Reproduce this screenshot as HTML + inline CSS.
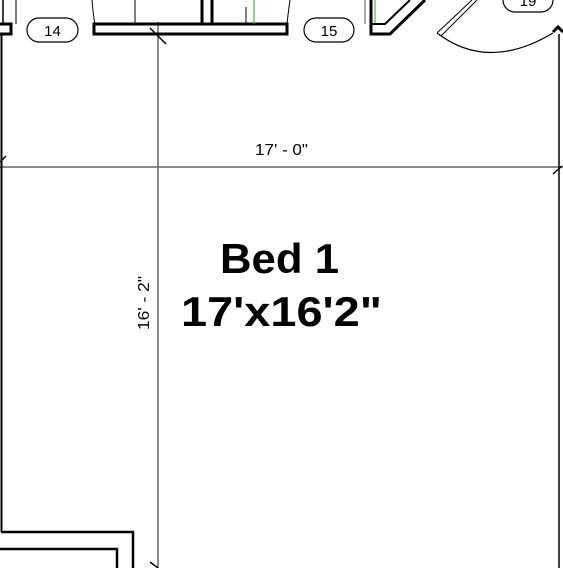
<!DOCTYPE html>
<html><head><style>html,body{margin:0;padding:0;background:#fff;overflow:hidden}svg{display:block}</style></head>
<body>
<svg width="563" height="568" viewBox="0 0 563 568" xmlns="http://www.w3.org/2000/svg" font-family="Liberation Sans, Arial, sans-serif">
<line x1="0" y1="167" x2="563" y2="167" stroke="#666" stroke-width="1.5"/>
<line x1="158" y1="22" x2="158" y2="568" stroke="#666" stroke-width="1.5"/>
<line x1="150" y1="28" x2="166" y2="44" stroke="#000" stroke-width="1.5"/>
<line x1="0" y1="162" x2="6" y2="156" stroke="#000" stroke-width="1.5"/>
<line x1="553" y1="174" x2="562" y2="166" stroke="#000" stroke-width="1.5"/>
<line x1="150" y1="562" x2="158" y2="568" stroke="#000" stroke-width="1.5"/>
<line x1="3" y1="0" x2="3" y2="24" stroke="#000" stroke-width="1.5"/>
<line x1="16" y1="0" x2="16" y2="24" stroke="#000" stroke-width="1"/>
<polyline points="0,24 11,24 11,34 0,34" fill="none" stroke="#000" stroke-width="3"/>
<line x1="1.5" y1="34" x2="1.5" y2="532" stroke="#000" stroke-width="2"/>
<polyline points="1,532 133,532 133,568" fill="none" stroke="#000" stroke-width="2.5"/>
<polyline points="0,549 117,549 117,568" fill="none" stroke="#000" stroke-width="2.5"/>
<rect x="94" y="24" width="193" height="10" fill="none" stroke="#000" stroke-width="3"/>
<line x1="202" y1="0" x2="202" y2="24" stroke="#000" stroke-width="3"/>
<line x1="212" y1="0" x2="212" y2="24" stroke="#000" stroke-width="3"/>
<line x1="135" y1="0" x2="135" y2="24" stroke="#000" stroke-width="1"/>
<line x1="246" y1="7" x2="246" y2="24" stroke="#000" stroke-width="1"/>
<line x1="254" y1="0" x2="254" y2="24" stroke="#2a2" stroke-width="1"/>
<path d="M92,0 Q93,14 95,24" fill="none" stroke="#000" stroke-width="1"/>
<path d="M290,0 Q288,14 287,24" fill="none" stroke="#000" stroke-width="1"/>
<rect x="27" y="18" width="51" height="24" rx="12" fill="#fff" stroke="#000" stroke-width="1.2"/>
<text x="52.5" y="36" font-size="15" text-anchor="middle">14</text>
<rect x="304" y="18" width="50" height="24" rx="12" fill="#fff" stroke="#000" stroke-width="1.2"/>
<text x="329" y="36" font-size="15" text-anchor="middle">15</text>
<rect x="503" y="-12" width="50" height="24" rx="12" fill="#fff" stroke="#000" stroke-width="1.2"/>
<text x="528" y="6" font-size="15" text-anchor="middle">19</text>
<line x1="365" y1="0" x2="365" y2="24" stroke="#555" stroke-width="1"/>
<line x1="375" y1="0" x2="375" y2="24" stroke="#2a2" stroke-width="1"/>
<polyline points="371,0 371,34 390,34 425,0" fill="none" stroke="#000" stroke-width="3"/>
<polyline points="371,24 385,24 410,0" fill="none" stroke="#000" stroke-width="2"/>
<line x1="437" y1="33" x2="472" y2="0" stroke="#000" stroke-width="1"/>
<line x1="441" y1="36" x2="477" y2="0" stroke="#000" stroke-width="1"/>
<path d="M437,33 Q488,72 553,33" fill="none" stroke="#000" stroke-width="1.2"/>
<polyline points="553,32 558,27 563,32" fill="none" stroke="#000" stroke-width="3"/>
<line x1="559" y1="34" x2="559" y2="568" stroke="#000" stroke-width="1.5"/>
<text x="255" y="155" font-size="16" textLength="53" lengthAdjust="spacingAndGlyphs">17' - 0"</text>
<text transform="translate(149,330) rotate(-90)" font-size="16" textLength="54" lengthAdjust="spacingAndGlyphs">16' - 2"</text>
<text x="220" y="273" font-size="42" font-weight="bold" textLength="119" lengthAdjust="spacingAndGlyphs">Bed 1</text>
<text x="181" y="326" font-size="42" font-weight="bold" textLength="201" lengthAdjust="spacingAndGlyphs">17'x16'2"</text>
</svg>
</body></html>
